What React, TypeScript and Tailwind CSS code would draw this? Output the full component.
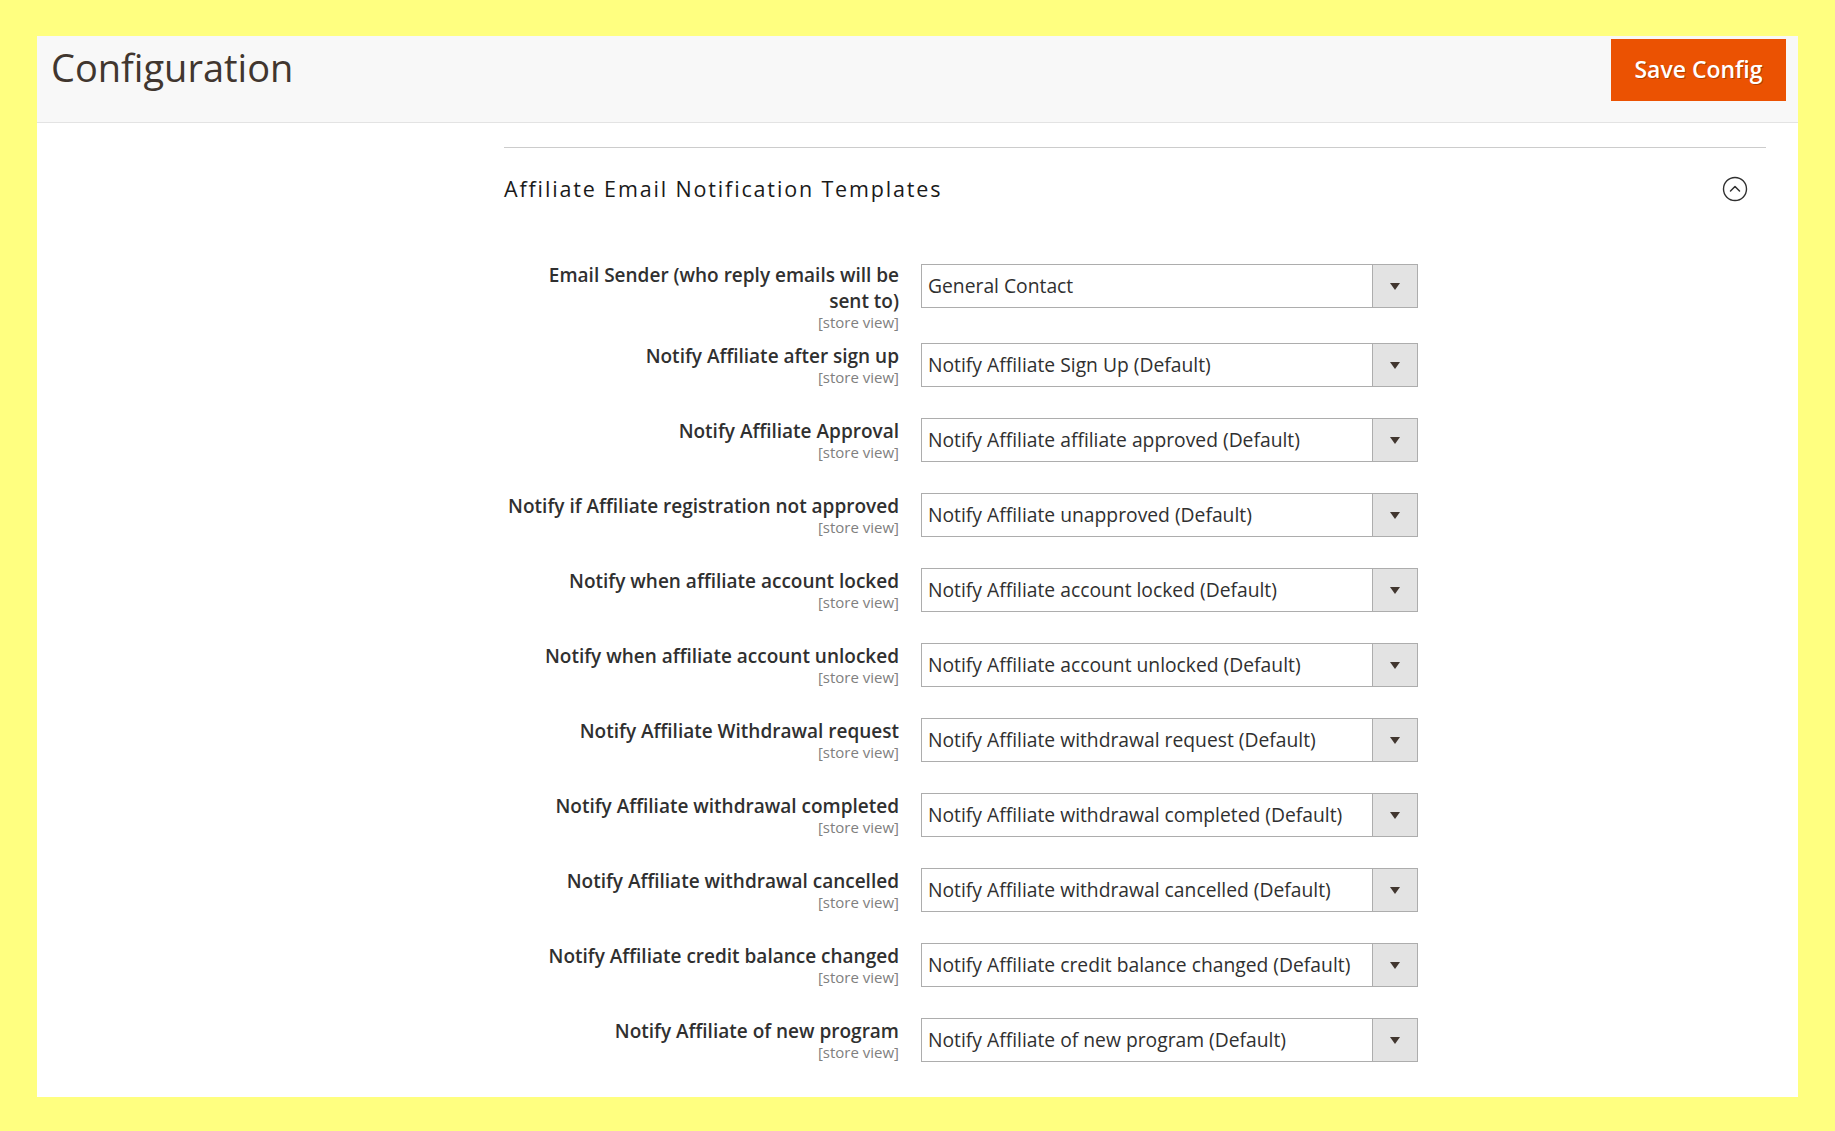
// Magento-style admin configuration page: email template selects

const rows: { label: string; value: string }[] = [
  { label: 'Email Sender (who reply emails will be sent to)', value: 'General Contact' },
  { label: 'Notify Affiliate after sign up', value: 'Notify Affiliate Sign Up (Default)' },
  { label: 'Notify Affiliate Approval', value: 'Notify Affiliate affiliate approved (Default)' },
  { label: 'Notify if Affiliate registration not approved', value: 'Notify Affiliate unapproved (Default)' },
  { label: 'Notify when affiliate account locked', value: 'Notify Affiliate account locked (Default)' },
  { label: 'Notify when affiliate account unlocked', value: 'Notify Affiliate account unlocked (Default)' },
  { label: 'Notify Affiliate Withdrawal request', value: 'Notify Affiliate withdrawal request (Default)' },
  { label: 'Notify Affiliate withdrawal completed', value: 'Notify Affiliate withdrawal completed (Default)' },
  { label: 'Notify Affiliate withdrawal cancelled', value: 'Notify Affiliate withdrawal cancelled (Default)' },
  { label: 'Notify Affiliate credit balance changed', value: 'Notify Affiliate credit balance changed (Default)' },
  { label: 'Notify Affiliate of new program', value: 'Notify Affiliate of new program (Default)' },
];

function SelectBox({ value }: { value: string }) {
  return (
    <div className="flex h-[44px] w-[497px] border border-[#adadad] bg-white">
      <div className="flex flex-1 items-center pl-[6px] text-[19.3px] text-[#303030]">{value}</div>
      <div className="flex w-[45px] items-center justify-center border-l border-[#adadad] bg-[#e3e3e3]">
        <svg width="10" height="7" viewBox="0 0 10 7">
          <path d="M0 0h10L5 7z" fill="#41362f" />
        </svg>
      </div>
    </div>
  );
}

function CollapseIcon() {
  return (
    <svg width="26" height="26" viewBox="0 0 26 26" fill="none">
      <circle cx="13" cy="13" r="11.5" stroke="#303030" strokeWidth="1.4" />
      <path d="M8.5 15l4.5-4.5 4.5 4.5" stroke="#303030" strokeWidth="1.5" strokeLinecap="round" strokeLinejoin="round" />
    </svg>
  );
}

export default function App() {
  return (
    <div className="flex min-h-screen flex-col bg-[#ffff80] pb-[34px] pl-[37px] pr-[37px] pt-[36px] font-['Open_Sans',sans-serif]">
      <div className="flex flex-1 flex-col bg-white">
        {/* page header */}
        <div className="flex h-[87px] items-start justify-between border-b border-[#e3e3e3] bg-[#f8f8f8]">
          <h1 className="pl-[14px] pt-[3px] text-[38px] font-normal text-[#41362f]">Configuration</h1>
          <button className="mr-[12px] mt-[3px] h-[62px] w-[175px] border border-[#eb5202] bg-[#eb5202] pb-[2px] text-[23px] font-semibold text-white [text-shadow:1px_1px_0_rgba(0,0,0,0.25)]">
            Save Config
          </button>
        </div>

        {/* section */}
        <div className="pb-[4px] pl-[467px] pr-[32px] pt-[24px]">
          <div className="border-t border-[#cccccc] pt-[25px]">
            <div className="flex items-center justify-between pr-[18px]">
              <h2 className="text-[21.5px] font-medium tracking-[1.85px] text-[#1a1a1a]">
                Affiliate Email Notification Templates
              </h2>
              <CollapseIcon />
            </div>

            <div className="mt-[57px] flex flex-col">
              {rows.map((r, i) => (
                <div key={r.label} className={`flex items-start ${i === 0 ? 'pb-[29px]' : 'pb-[31px]'}`}>
                  <div className="relative ml-[2px] w-[393px] text-right">
                    <span className="text-[19px] font-semibold leading-[26px] text-[#303030]">{r.label}</span>
                    <span className="absolute right-0 top-full text-[15px] leading-[17px] text-[#808080]">
                      [store view]
                    </span>
                  </div>
                  <div className={`ml-[22px] ${i === 0 ? 'mt-[2px]' : ''}`}>
                    <SelectBox value={r.value} />
                  </div>
                </div>
              ))}
            </div>
          </div>
        </div>
      </div>
    </div>
  );
}
